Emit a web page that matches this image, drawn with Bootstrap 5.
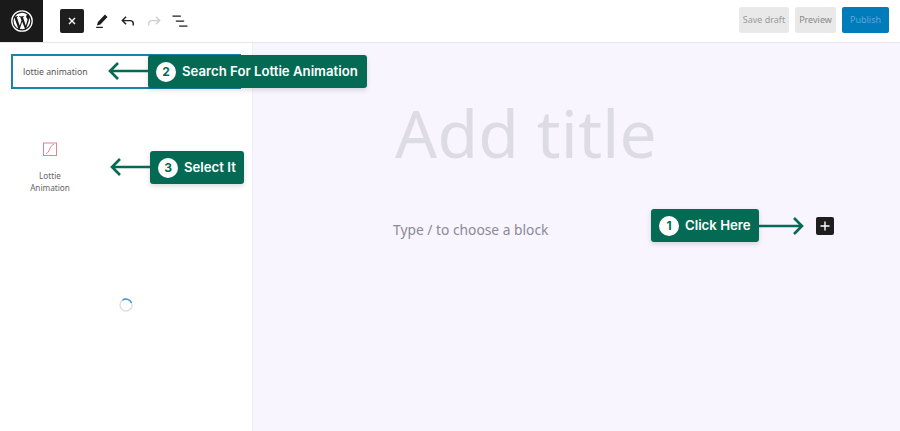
<!DOCTYPE html>
<html lang="en">
<head>
  <meta charset="UTF-8">
  <title>Add title</title>
  <meta name="viewport" content="width=device-width, initial-scale=1.0">
  <link href="https://cdn.jsdelivr.net/npm/bootstrap@5.3.0/dist/css/bootstrap.min.css" rel="stylesheet">
  <style>
    html, body { height: 431px; overflow: hidden; }
    body { font-family: "Noto Sans", sans-serif; background: #fff; position: relative; }
    .topbar { height: 43px; border-bottom: 1px solid #e6e6ea; }
    .wp-tile { width: 43px; height: 42px; background: #1a1a1a; }
    .tool-list { padding-left: 17px; gap: 6px; }
    .close-tile { width: 24px; height: 24px; background: #1e1e1e; border-radius: 2px; margin-right: 2px; }
    .tool-btn { width: 20px; height: 20px; }
    .action-list { gap: 6px; padding: 7px 11px 0 0; }
    .btn-draft, .btn-preview, .btn-publish { height: 26px; font-size: 9px; border-radius: 2px; padding: 0; line-height: 26px; border: 0; }
    .btn-draft { width: 50px; background: #e9e9e9; color: #999; }
    .btn-preview { width: 41px; background: #e9e9e9; color: #888; }
    .btn-publish { width: 47px; background: #007cba; color: #5aa9d8; }
    .btn-publish:disabled, .btn-draft:disabled, .btn-preview:disabled { opacity: 1; }
    .workspace { height: 388px; }
    .inserter { width: 253px; border-right: 1px solid #f0eef5; }
    .search-box { margin: 11px 0 0 11px; width: 230px; height: 35px; border: 2px solid #1a83ab; padding-left: 10px; font-size: 8.7px; color: #555; line-height: 33px; }
    .block-tile { width: 76px; margin: 52px 0 0 12px; color: #666; font-size: 8.2px; line-height: 11.5px; }
    .block-tile svg { margin-bottom: 13px; }
    .spin-wrap { margin: 104px 0 0 118px; line-height: 0; }
    .canvas { background: #f8f5ff; }
    .title-ph { font-size: 66px; line-height: 84px; font-weight: 400; color: #dddce5; margin: 47px 0 0 142px; letter-spacing: .3px; }
    .para-row { margin: 46px 0 0 140px; width: 441px; }
    .para-ph { font-size: 13.8px; color: #8a8a94; line-height: 20px; }
    .plus-tile { width: 18px; height: 18px; background: #1e1e1e; border-radius: 2px; margin-top: -3px; }
    .callout { position: absolute; background: #046a53; color: #fff; border-radius: 3px; height: 33px; font-family: Inter, sans-serif; font-weight: 600; font-size: 13.2px; padding: 1px 0 0 8px; gap: 6px; box-shadow: 0 2px 5px rgba(0,0,0,.15); white-space: nowrap; }
    .step-dot { width: 20px; height: 20px; border-radius: 50%; background: #fff; color: #046a53; font-size: 12px; font-weight: 700; }
    .call-1 { left: 651px; top: 209px; width: 108px; }
    .call-2 { left: 148px; top: 55px; width: 219px; }
    .call-3 { left: 150px; top: 151px; width: 94px; }
    .arrow-mark { position: absolute; }
    .arrow-1 { left: 758px; top: 216px; }
    .arrow-2 { left: 107px; top: 60px; }
    .arrow-3 { left: 109px; top: 156px; }
  </style>
</head>
<body>

  <!-- top bar -->
  <div class="topbar d-flex justify-content-between">
    <div class="d-flex">
      <div class="wp-tile d-flex align-items-center justify-content-center">
        <svg width="24" height="24" viewBox="0 0 24 24">
          <circle cx="12" cy="12" r="10.2" fill="none" stroke="#fff" stroke-width="1.3"/>
          <path fill="#fff" d="M3.6 12c0 3.3 1.9 6.2 4.7 7.5L4.3 8.6A8.4 8.4 0 0 0 3.6 12zm14-.4c0-1-.4-1.8-.7-2.3-.4-.7-.8-1.2-.8-1.9 0-.7.5-1.4 1.3-1.4h.1A8.4 8.4 0 0 0 5 7.4h.5c.9 0 2.2-.1 2.2-.1.4 0 .5.6 0 .7 0 0-.4 0-.9.1l2.9 8.7 1.8-5.3-1.3-3.4-.8-.1c-.5 0-.4-.7 0-.7 0 0 1.3.1 2.2.1.9 0 2.2-.1 2.2-.1.4 0 .5.6 0 .7 0 0-.4 0-.9.1l2.9 8.6.8-2.7c.3-1.1.6-1.9.6-2.6zm-5.4 1.2-2.4 7a8.4 8.4 0 0 0 5.2-.1l-.1-.1-2.7-6.8zm7-4.6.1.9c0 .8-.2 1.8-.6 2.9l-2.5 7.2A8.4 8.4 0 0 0 19.2 8.2z"/>
        </svg>
      </div>
      <div class="tool-list d-flex align-items-center">
        <div class="close-tile d-flex align-items-center justify-content-center">
          <svg width="10" height="10" viewBox="0 0 10 10"><path d="M2 2l6 6M8 2l-6 6" stroke="#fff" stroke-width="1.4" fill="none"/></svg>
        </div>
        <svg class="tool-btn" viewBox="0 0 24 24"><path fill="#1e1e1e" d="M15.6 4.2l3 3-8.5 9-4.2 1.2 1.2-4.2zM5 20.5h8v-1.6H5z"/></svg>
        <svg class="tool-btn" viewBox="0 0 24 24"><path fill="none" stroke="#1e1e1e" stroke-width="1.7" d="M5.5 11.5h9c2.2 0 3.8 1.4 3.8 3.4v2.6M9.7 7 5.2 11.5l4.5 4.5"/></svg>
        <svg class="tool-btn" viewBox="0 0 24 24"><path fill="none" stroke="#cfcfcf" stroke-width="1.7" d="M18.5 11.5h-9c-2.2 0-3.8 1.4-3.8 3.4v2.6M14.3 7l4.5 4.5-4.5 4.5"/></svg>
        <svg class="tool-btn" viewBox="0 0 24 24"><path stroke="#1e1e1e" stroke-width="1.5" fill="none" d="M3 6h10M7 12h10M11 18h10"/></svg>
      </div>
    </div>
    <div class="action-list d-flex align-items-start">
      <button class="btn-draft" disabled>Save draft</button>
      <button class="btn-preview" disabled>Preview</button>
      <button class="btn-publish" disabled>Publish</button>
    </div>
  </div>

  <div class="workspace d-flex">
    <!-- block inserter -->
    <div class="inserter flex-shrink-0">
      <div class="search-box">lottie animation</div>
      <div class="block-tile text-center">
        <svg class="d-block mx-auto" width="16" height="16" viewBox="0 0 16 16">
          <rect x="1.5" y="2" width="13" height="12.5" fill="none" stroke="#e5809c" stroke-width="1"/>
          <path d="M4 12.5c3.5 0 3.5-8.5 8-9" fill="none" stroke="#e5809c" stroke-width="1"/>
        </svg>
        Lottie<br>Animation
      </div>
      <div class="spin-wrap">
        <svg width="16" height="16" viewBox="0 0 16 16">
          <circle cx="8" cy="8" r="6" fill="none" stroke="#dedede" stroke-width="1.4"/>
          <path d="M4.5 3.2A6 6 0 0 1 13.6 6" fill="none" stroke="#3f97c6" stroke-width="1.4"/>
        </svg>
      </div>
    </div>

    <!-- editor canvas -->
    <div class="canvas flex-grow-1">
      <div class="title-ph">Add title</div>
      <div class="para-row d-flex justify-content-between align-items-start">
        <div class="para-ph">Type / to choose a block</div>
        <div class="plus-tile d-flex align-items-center justify-content-center">
          <svg width="10" height="10" viewBox="0 0 10 10"><path d="M5 .5v9M.5 5h9" stroke="#fff" stroke-width="1.4"/></svg>
        </div>
      </div>
    </div>
  </div>

  <!-- annotations -->
  <div class="callout call-1 d-flex align-items-center"><span class="step-dot d-flex align-items-center justify-content-center">1</span>Click Here</div>
  <svg class="arrow-mark arrow-1" width="48" height="20" viewBox="0 0 48 20"><path d="M1 10h43M36 2l8 8-8 8" fill="none" stroke="#046a53" stroke-width="2.6"/></svg>

  <div class="callout call-2 d-flex align-items-center"><span class="step-dot d-flex align-items-center justify-content-center">2</span>Search For Lottie Animation</div>
  <svg class="arrow-mark arrow-2" width="42" height="22" viewBox="0 0 42 22"><path d="M41 11H3M11 3l-8 8 8 8" fill="none" stroke="#046a53" stroke-width="2.6"/></svg>

  <div class="callout call-3 d-flex align-items-center"><span class="step-dot d-flex align-items-center justify-content-center">3</span>Select It</div>
  <svg class="arrow-mark arrow-3" width="42" height="22" viewBox="0 0 42 22"><path d="M41 11H3M11 3l-8 8 8 8" fill="none" stroke="#046a53" stroke-width="2.6"/></svg>

  <script src="https://cdn.jsdelivr.net/npm/bootstrap@5.3.0/dist/js/bootstrap.bundle.min.js"></script>
</body>
</html>
